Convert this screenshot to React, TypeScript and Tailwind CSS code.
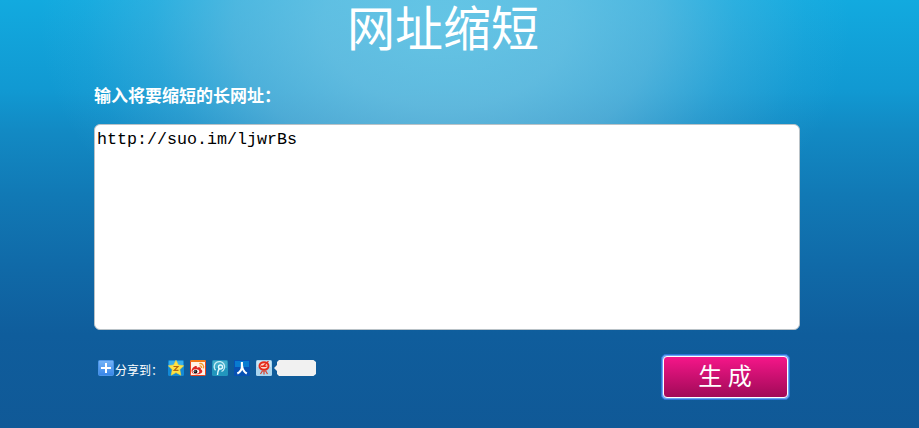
import React from "react";

function PlusIcon() {
  return (
    <svg className="block h-4 w-4" viewBox="0 0 16 16">
      <defs>
        <linearGradient id="plus" x1="0" y1="0" x2="0" y2="1">
          <stop offset="0" stopColor="#76b4f7" />
          <stop offset="1" stopColor="#3785e8" />
        </linearGradient>
      </defs>
      <rect x=".5" y=".5" width="15" height="15" rx="1" fill="url(#plus)" stroke="#4b94e8" />
      <path d="M8 3v10M3 8h10" stroke="#fff" strokeWidth="2" />
    </svg>
  );
}

function QzoneIcon() {
  return (
    <svg className="block h-4 w-4" viewBox="0 0 16 16">
      <rect width="16" height="16" rx="1.5" fill="#1389d6" />
      <rect x="1" y="1" width="14" height="6" fill="#39aeea" />
      <path d="M8 .3l2.300 4.700 5.400.8-3.900 3.800 1 5.600L8 12.600l-4.800 2.600 1-5.600L.3 5.800l5.400-.8z" fill="#ffe345" stroke="#f9d635" strokeWidth=".6" />
      <path d="M5.500 6.500h4.500L6.200 10.400h4.300" fill="none" stroke="#b46a12" strokeWidth="1.200" />
    </svg>
  );
}

function WeiboIcon() {
  return (
    <svg className="block h-4 w-4" viewBox="0 0 16 16">
      <rect x=".5" y=".5" width="15" height="15" rx="1" fill="#fff3e8" stroke="#e9431f" />
      <path d="M.5 1h15" stroke="#f37a19" strokeWidth="2" />
      <path d="M1.500 11c0-3 4-6 5.200-4.700.5.6.1 1.500.1 1.500s3.500-1.300 4 .2c.2.500-.1 1.200-.1 1.200 2 .7 2 2.500.8 3.700C8.300 15.200 1.500 14.800 1.500 11z" fill="#dd2722" />
      <ellipse cx="5.900" cy="11.500" rx="3.300" ry="2.200" fill="#fff" />
      <circle cx="5.500" cy="11.600" r="1.900" fill="#16191b" />
      <circle cx="5" cy="11" r=".6" fill="#fff" />
      <path d="M9.300 3.600c3-.5 5 1.700 4.200 4.800M9.600 5.900c1.600-.2 2.200.7 1.900 2.100" fill="none" stroke="#f59a2c" strokeWidth="1.300" />
    </svg>
  );
}

function TencentIcon() {
  return (
    <svg className="block h-4 w-4" viewBox="0 0 16 16">
      <rect width="16" height="16" rx="1.5" fill="#2296bd" />
      <rect x="1" y="1" width="14" height="7" fill="#3fabc9" />
      <path d="M3.600 10.300A5.200 5.200 0 1 1 9.500 11.500" fill="none" stroke="#c8edf5" strokeWidth="1.300" />
      <circle cx="8.500" cy="7" r="2" fill="none" stroke="#e7fbff" strokeWidth="1.300" />
      <path d="M7.300 8.500C6 10.500 5.500 12 5.500 15" fill="none" stroke="#e7fbff" strokeWidth="1.400" />
    </svg>
  );
}

function RenrenIcon() {
  return (
    <svg className="block h-4 w-4" viewBox="0 0 16 16">
      <rect width="16" height="16" rx="1" fill="#0751b4" />
      <path d="M1 1h14v6H1z" fill="#087bd1" />
      <path d="M7.900 2v4.500c0 3-1.600 5.500-4.600 7M8 5.500c.4 4 1.800 6.200 4.800 8" fill="none" stroke="#fff" strokeWidth="2.100" />
    </svg>
  );
}

function KaixinIcon() {
  return (
    <svg className="block h-4 w-4" viewBox="0 0 16 16">
      <rect width="16" height="16" rx="1.5" fill="#a9d5ee" />
      <rect x="1" y="1" width="14" height="6" fill="#c9e8f5" />
      <ellipse cx="8" cy="6" rx="4.500" ry="3.800" fill="#fbd8cb" stroke="#e52b19" strokeWidth="2" />
      <path d="M5 6.300h5.500M10 3.500L7.500 6M11 2.500l1.500-1.200" fill="none" stroke="#e52b19" strokeWidth="1.400" />
      <path d="M6 11h4.500M6.300 11l-1.800 3M8 10.500v4M9.700 11l1.800 3" stroke="#d74431" strokeWidth="1.200" />
    </svg>
  );
}

function CountBubble() {
  return (
    <svg className="block h-4 w-[42px]" viewBox="0 0 42 16">
      <path d="M0 8l3-3V2l2-2h34.500L42 2v12l-2.500 2H5l-2-2v-3z" fill="#f1f1f1" />
    </svg>
  );
}

export default function App() {
  return (
    <main className="flow-root h-[428px] w-[919px] bg-[radial-gradient(ellipse_405px_275px_at_445px_25px,rgba(132,208,232,0.72)_0%,rgba(135,203,229,0.66)_30%,rgba(130,196,225,0.53)_52%,rgba(110,190,225,0.28)_72%,rgba(90,185,225,0.09)_89%,transparent_100%),linear-gradient(to_bottom,#12aadf_0px,#1199d2_90px,#128ac4_130px,#1179b5_195px,#106aa8_265px,#0f5d9c_335px,#105997_428px)] font-['Noto_Sans_CJK_SC',sans-serif] text-white">
      <div className="ml-[94px] w-[706px]">
        <h1 className="h-[80px] pl-[253px] text-5xl leading-[51px] font-normal">网址缩短</h1>
        <label htmlFor="url" className="block h-[44px] text-[17px] leading-[30px] font-bold">输入将要缩短的长网址：</label>
        <textarea
          id="url"
          readOnly
          spellCheck={false}
          defaultValue="http://suo.im/ljwrBs"
          className="block h-[206px] w-[706px] resize-none rounded-md border border-[#b9c2c7] bg-white px-[2px] py-[3px] font-['Liberation_Mono',monospace] text-[16.67px] leading-6 text-black outline-none"
        />
        <div className="flex justify-between pt-[24px]">
          <div className="flex items-start pt-[6px] pl-[4px]">
            <PlusIcon />
            <span className="w-[54px] pl-px text-xs leading-5 whitespace-nowrap">分享到：</span>
            <div className="flex gap-1.5">
              <QzoneIcon />
              <WeiboIcon />
              <TencentIcon />
              <RenrenIcon />
              <KaixinIcon />
            </div>
            <div className="pl-[2px]"><CountBubble /></div>
          </div>
          <button className="mr-[10px] h-[46px] w-[129px] rounded-[5px] border border-[#2f74d5] bg-[#6aa5f5] p-px">
            <span className="flex h-full w-full items-center justify-center rounded-[4px] border border-white bg-linear-to-b from-[#f51689] to-[#a10a58] pr-px pb-[5px] text-2xl leading-8 whitespace-pre">生 成</span>
          </button>
        </div>
      </div>
    </main>
  );
}
